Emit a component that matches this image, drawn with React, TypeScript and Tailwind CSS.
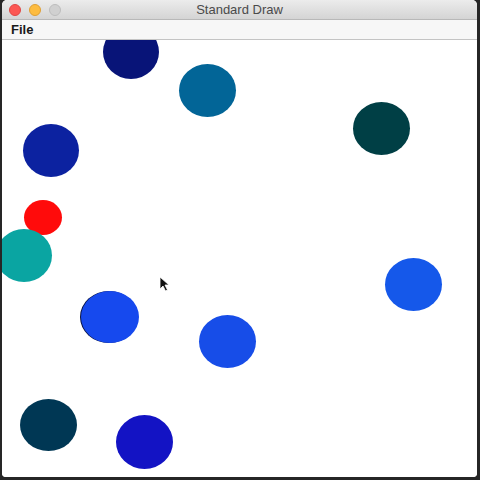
import React from "react";

type C = { cx: number; cy: number; rx: number; ry: number; color: string; edge?: string };

const circles: C[] = [
  { cx: 131, cy: 52, rx: 28, ry: 27, color: "#081478" },
  { cx: 207, cy: 90, rx: 28.5, ry: 26.5, color: "#026597" },
  { cx: 381, cy: 128, rx: 28.5, ry: 26.5, color: "#003f45" },
  { cx: 51, cy: 150, rx: 28, ry: 26.5, color: "#0c22a0" },
  { cx: 43, cy: 217, rx: 19, ry: 17.5, color: "#ff0b0b" },
  { cx: 24, cy: 255, rx: 28, ry: 26.5, color: "#0aa5a2" },
  { cx: 109.5, cy: 317, rx: 29, ry: 26, color: "#1649ee", edge: "#061040" },
  { cx: 227.5, cy: 341.5, rx: 28.5, ry: 26.5, color: "#174de8" },
  { cx: 413.5, cy: 284.5, rx: 28.5, ry: 26.5, color: "#1558ea" },
  { cx: 48, cy: 425, rx: 28.5, ry: 26, color: "#003754" },
  { cx: 144.5, cy: 442, rx: 28.5, ry: 27, color: "#1313c4" },
];

export default function App() {
  return (
    <div className="w-[480px] h-[480px] bg-[#262626] overflow-hidden" style={{ fontFamily: '"Liberation Sans", Arial, sans-serif' }}>
      <div className="ml-[2px] w-[475px] h-[477px] rounded-t-[5px] rounded-b-[4px] overflow-hidden flex flex-col bg-white">
        <div className="relative h-[20px] flex items-center justify-center bg-gradient-to-b from-[#ececec] to-[#d4d4d4] border-b border-[#b8b8b8]">
          <div className="absolute left-[7px] top-[4px] flex gap-[8px]">
            <span className="w-[12px] h-[12px] rounded-full bg-[#fc5753] border border-[#df4744]" />
            <span className="w-[12px] h-[12px] rounded-full bg-[#fdbc40] border border-[#de9f34]" />
            <span className="w-[12px] h-[12px] rounded-full bg-[#d0d0d0] border border-[#bcbcbc]" />
          </div>
          <span className="text-[13px] text-[#4a4a4a] leading-none">Standard Draw</span>
        </div>
        <div className="h-[20px] flex items-center bg-[#f7f7f7] border-b border-[#c4c4c4] px-[9px]">
          <span className="text-[13px] font-bold text-[#1a1a1a] leading-none">File</span>
        </div>
        <div className="relative flex-1 overflow-hidden bg-white">
          {circles.map((c, i) => (
            <div
              key={i}
              className="absolute rounded-[50%]"
              style={{
                left: c.cx - c.rx - 2,
                top: c.cy - c.ry - 40,
                width: c.rx * 2,
                height: c.ry * 2,
                background: c.color,
                boxShadow: c.edge ? `-1px 0 0 ${c.edge}` : undefined,
              }}
            />
          ))}
          <svg className="absolute left-[157px] top-[236px]" width="11" height="16" viewBox="0 0 11 16">
            <path d="M1 1 L1 13 L4 10 L6.5 15 L8.5 14 L6 9 L10 9 Z" fill="#111" stroke="#fff" strokeWidth="0.8" />
          </svg>
        </div>
      </div>
    </div>
  );
}
